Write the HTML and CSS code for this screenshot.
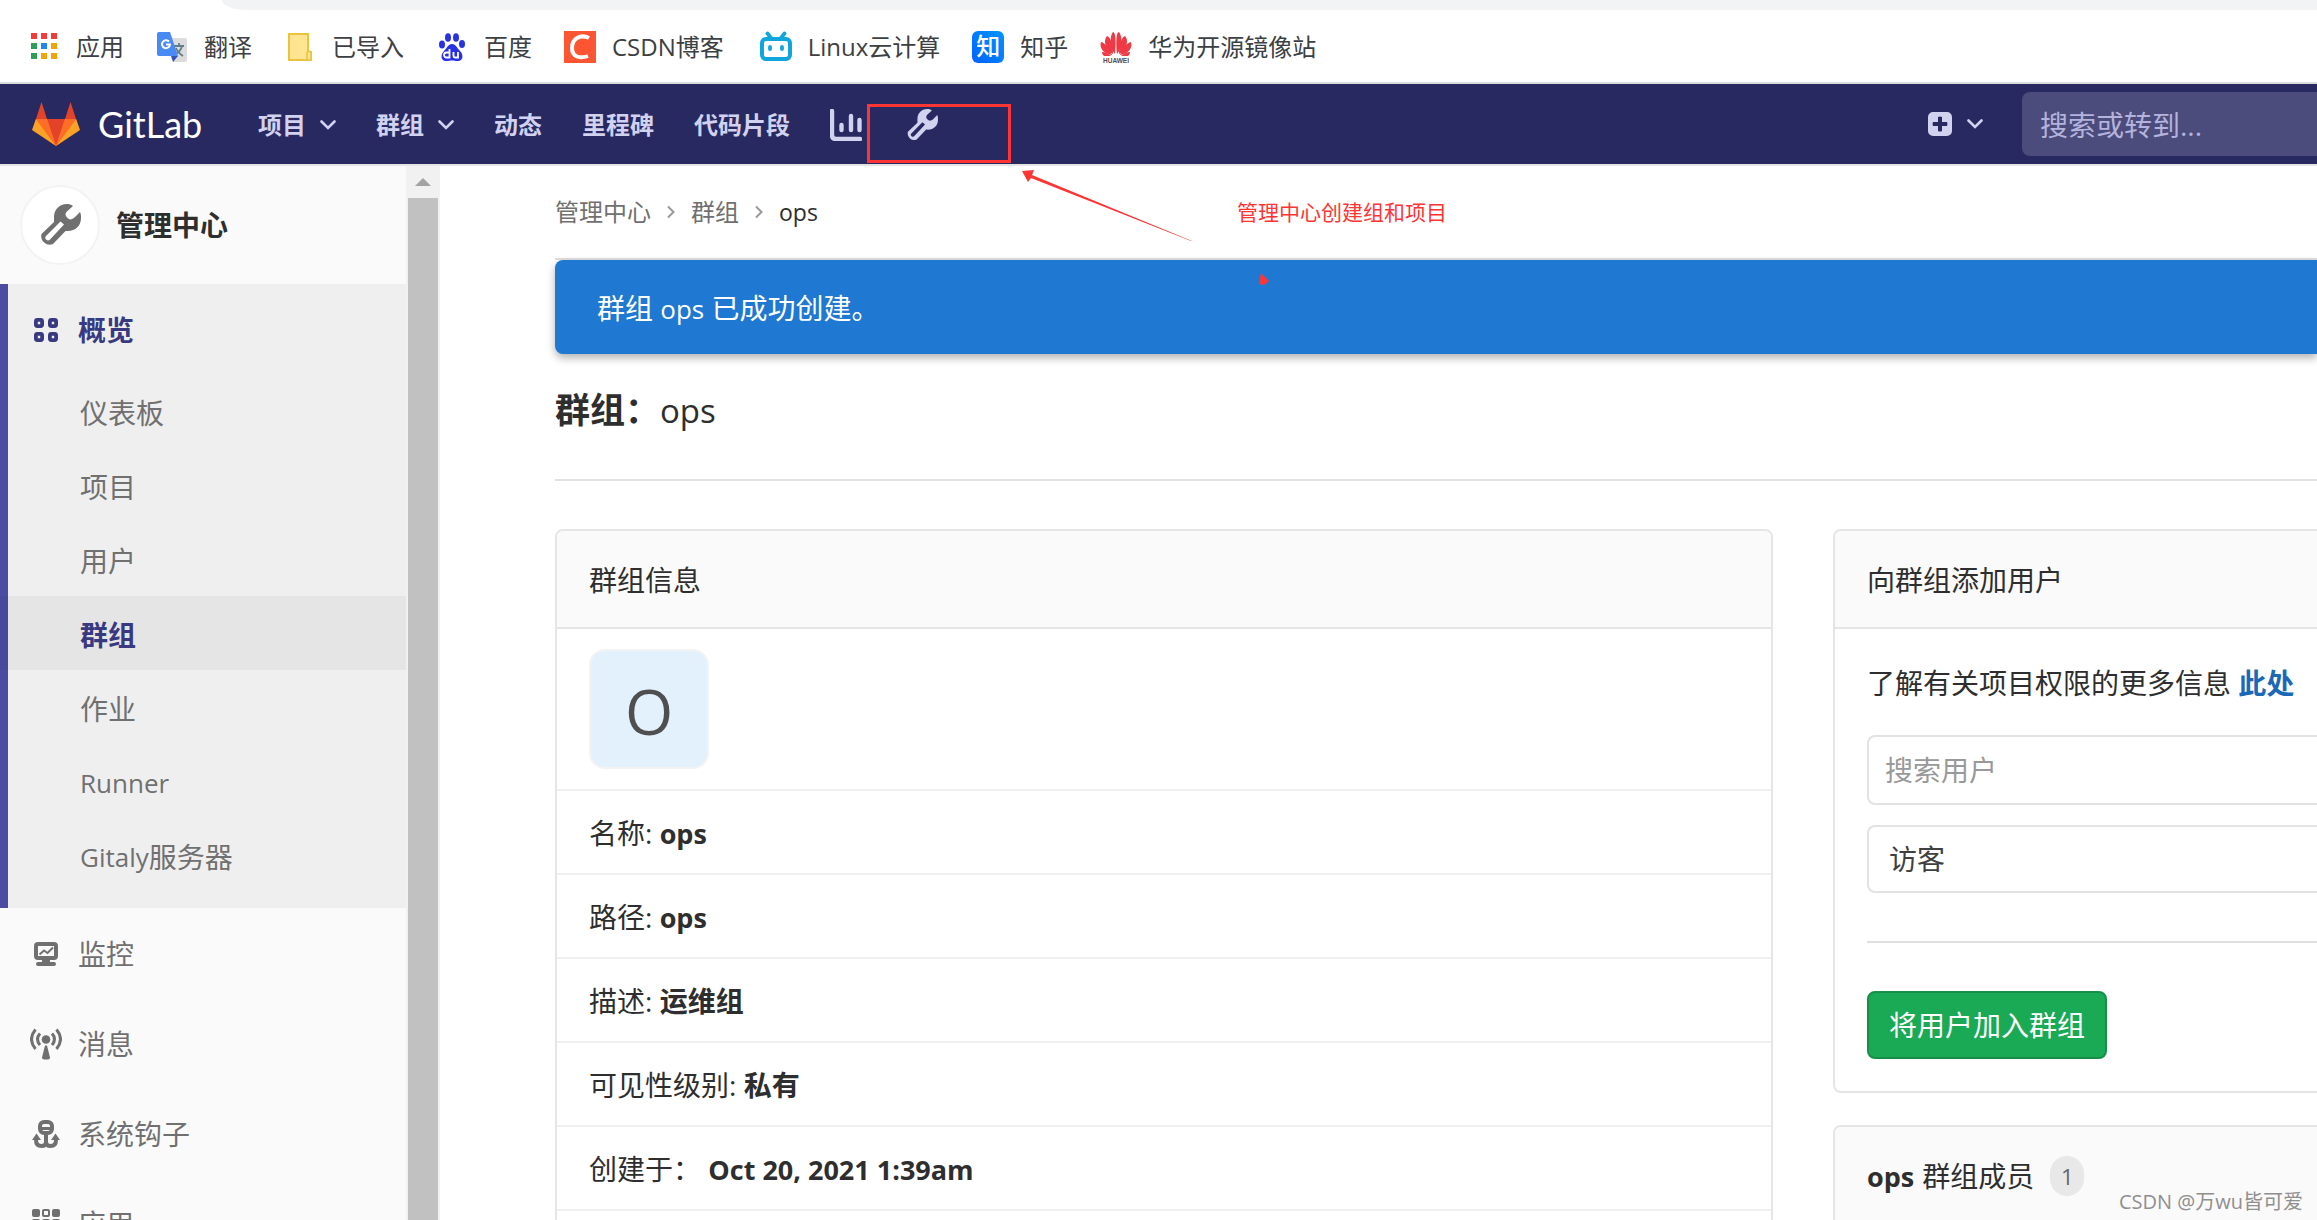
FILE: index.html
```html
<!DOCTYPE html>
<html lang="zh-CN">
<head>
<meta charset="utf-8">
<title>ops · 群组 · 管理中心 · GitLab</title>
<link rel="stylesheet" href="styles.css">
</head>
<body>
<svg class="defs" aria-hidden="true">
  <symbol id="wrench" viewBox="0 0 42 42"><path fill-rule="evenodd" d="M34 2C32 .6 30 0 28 0C20 0 15 6 15 13V18L2.500 30A8.500 8.500 0 0 0 14 40L26.500 27C36 28 42 22 42 14C42 12 42 10 41 8L35.500 13.500C32 16.500 30 15.500 28 13.500C26 11.500 26 9 28.500 7ZM21.500 17.500L25 20.500L11 35.500A2.600 2.600 0 0 1 7 32Z"/></symbol>
  <symbol id="down" viewBox="0 0 16 10"><path d="M1.500 1.500L8 8L14.500 1.500" fill="none" stroke="currentColor" stroke-width="2.600" stroke-linecap="round"/></symbol>
  <symbol id="right" viewBox="0 0 8 14"><path d="M1 1.500L6.500 7L1 12.500" fill="none" stroke="currentColor" stroke-width="2"/></symbol>
</svg>

<div class="omnibox"></div>
<nav class="bookmarks" aria-label="书签">
  <a href="#"><svg viewBox="0 0 32 32"><g fill="#f23b3b"><path d="M3 2h6v6H3zM13 2h6v6h-6zM23 2h6v6h-6z"/></g><path fill="#2f9e5b" d="M3 12h6v6H3zM3 22h6v6H3z"/><path fill="#1e88f0" d="M13 12h6v6h-6z"/><path fill="#f0a30a" d="M23 12h6v6h-6zM13 22h6v6h-6zM23 22h6v6h-6z"/></svg>应用</a>
  <a href="#"><svg viewBox="0 0 32 32"><path fill="#dcdcdc" d="M12 7h17a2 2 0 0 1 2 2v20a2 2 0 0 1-2 2H17z"/><path d="M18 15h10M23 12v3M26 15c-1 4-4 7-7 8M20 17c1 3 4 6 7 8" stroke="#607d8b" stroke-width="1.800" fill="none"/><path fill="#4a8af4" d="M3 1h11l8 24H3a2 2 0 0 1-2-2V3a2 2 0 0 1 2-2z"/><path fill="#3354b8" d="M15 25h7l-5 6z"/><path d="M13 10.500a4 4 0 1 0 1 3h-4" stroke="#fff" stroke-width="2" fill="none"/></svg>翻译</a>
  <a href="#"><svg viewBox="0 0 32 32"><path d="M5 3h19v18h3v8H5z" fill="#ffe591" stroke="#ebc43f" stroke-width="2"/><path d="M23 29v-6a2 2 0 0 1 4-1v7z" fill="#ffe591" stroke="#ebc43f" stroke-width="1.600"/></svg>已导入</a>
  <a href="#"><svg viewBox="0 0 32 32"><g fill="#2932e1"><ellipse cx="6" cy="13.500" rx="3" ry="4"/><ellipse cx="12" cy="6.500" rx="3" ry="4.300"/><ellipse cx="20" cy="6.500" rx="3" ry="4.300"/><ellipse cx="26" cy="13" rx="3" ry="4"/><path d="M16 13c4 0 5 4 8 7c4 4 3 10-2 10c-3 0-4-.5-6-.5S13 30 10 30c-5 0-6-6-2-10c3-3 4-7 8-7z"/></g><path d="M13.500 18v8.500h-3a2 2 0 0 1 0-5h3M17.500 21v4c0 1 .5 1.500 1.500 1.500h3V21" fill="none" stroke="#fff" stroke-width="1.800"/></svg>百度</a>
  <a href="#" class="long"><svg viewBox="0 0 32 32"><path fill="#fc5531" d="M0 0h32v32H0z"/><path d="M25 7C17 3 8 7 8 17c0 9 8 11 16 8" fill="none" stroke="#fff" stroke-width="4"/></svg>CSDN博客</a>
  <a href="#"><svg viewBox="0 0 32 32"><rect x="2" y="8" width="28" height="20" rx="4" fill="#fff" stroke="#10a5dc" stroke-width="4"/><path d="M7.500 2.500L11 7M24.500 2.500L21 7M10 16v2M22 16v2" stroke="#10a5dc" stroke-width="3.800" stroke-linecap="round"/></svg>Linux云计算</a>
  <a href="#"><span class="zhihu">知</span>知乎</a>
  <a href="#"><svg viewBox="0 0 32 32"><g fill="#ee3a45"><path d="M15 23C9 17 10 4 13 1c3 0 3 12 2 22zM17 23c6-6 5-19 2-22c-3 0-3 12-2 22z"/><path d="M13 23C5 19 3 9 7 5c4 1 6 11 6 18zM19 23c8-4 10-14 6-18c-4 1-6 11-6 18z"/><path d="M12 24C4 23-1 17 1 11c4 1 9 7 11 13zM20 24c8-1 13-7 11-13c-4 1-9 7-11 13z"/><path d="M11 25H4c-1-1-2-2-2-4c3 0 7 2 9 4zM21 25h7c1-1 2-2 2-4c-3 0-7 2-9 4z"/></g><text x="16" y="32" text-anchor="middle" font-family="Liberation Sans" font-weight="bold" font-size="6.500" fill="#554a50">HUAWEI</text></svg>华为开源镜像站</a>
</nav>

<header class="navbar">
  <a href="#" class="brand"><svg viewBox="0 0 48 46"><path fill="#fc6d26" d="M24 45L47 27L44 18H4L1 27z"/><path fill="#e24329" d="M24 45L33 18H15zM4 18L9.500 1L15 18zM33 18L38.500 1L44 18z"/><path fill="#fca326" d="M4 18L0 29L24 45zM44 18L48 29L24 45z"/><path fill="#fc6d26" d="M4 18H15L24 45zM44 18H33L24 45z"/></svg>GitLab</a>
  <nav class="menu" aria-label="主导航">
    <button type="button">项目<svg class="caret"><use href="#down"/></svg></button>
    <button type="button">群组<svg class="caret"><use href="#down"/></svg></button>
    <a href="#">动态</a><a href="#">里程碑</a><a href="#">代码片段</a>
    <a href="#" aria-label="实例统计"><svg class="tool" viewBox="0 0 32 32"><path d="M2 2V26Q2 30 6 30H30M11.500 16V21M21 7V21M29.500 11V21" fill="none" stroke="currentColor" stroke-width="4.400" stroke-linecap="round"/></svg></a>
    <a href="#" class="admin" aria-label="管理中心"><svg class="tool"><use href="#wrench"/></svg></a>
  </nav>
  <button type="button" class="create" aria-label="新建"><svg class="plus" viewBox="0 0 24 24"><path fill-rule="evenodd" d="M5 0H19A5 5 0 0 1 24 5V19A5 5 0 0 1 19 24H5A5 5 0 0 1 0 19V5A5 5 0 0 1 5 0zM10 5V10H5Q4 12 5 14H10V19Q12 20 14 19V14H19Q20 12 19 10H14V5Q12 4 10 5z"/></svg><svg class="caret"><use href="#down"/></svg></button>
  <input class="search" type="search" placeholder="搜索或转到..." aria-label="搜索或转到">
</header>

<div class="page">
  <aside class="sidebar">
    <div class="context"><span class="badge-icon"><svg><use href="#wrench"/></svg></span>管理中心</div>
    <section class="active">
      <a href="#" class="top"><svg viewBox="0 0 32 32"><g fill="none" stroke="currentColor" stroke-width="3.800"><rect x="5.900" y="5.900" width="6.200" height="6.200" rx="1.500"/><rect x="19.900" y="5.900" width="6.200" height="6.200" rx="1.500"/><rect x="5.900" y="19.900" width="6.200" height="6.200" rx="1.500"/><rect x="19.900" y="19.900" width="6.200" height="6.200" rx="1.500"/></g></svg>概览</a>
      <ul>
        <li><a href="#">仪表板</a></li>
        <li><a href="#">项目</a></li>
        <li><a href="#">用户</a></li>
        <li><a href="#" class="current">群组</a></li>
        <li><a href="#">作业</a></li>
        <li><a href="#"><span class="latin">Runner</span></a></li>
        <li><a href="#"><span class="latin">Gitaly</span>服务器</a></li>
      </ul>
    </section>
    <a href="#" class="top"><svg viewBox="0 0 32 32"><rect x="6" y="6" width="20" height="14" rx="2" fill="none" stroke="currentColor" stroke-width="4"/><path d="M9.500 16.500L14 12.500L17.500 15L23 9.500" fill="none" stroke="currentColor" stroke-width="2"/><path d="M12 21h8v3h4a2 2 0 0 1 0 4H8a2 2 0 0 1 0-4h4z" fill="currentColor"/></svg>监控</a>
    <a href="#" class="top"><svg viewBox="0 0 32 32"><g fill="currentColor"><circle cx="16" cy="11.500" r="4.300"/><path d="M15 17.500h2l3 12q0 2-2 2h-4q-2 0-2-2z"/></g><g fill="none" stroke="currentColor" stroke-width="3"><path d="M5.500 1.500Q-2.500 11 5.500 21M26.500 1.500Q34.500 11 26.500 21"/><path d="M10 5.500Q5 11 10 17M22 5.500Q27 11 22 17"/></g></svg>消息</a>
    <a href="#" class="top"><svg viewBox="0 0 32 32"><g fill="none" stroke="currentColor" stroke-width="4"><rect x="10" y="4" width="12" height="11" rx="4"/><path d="M10 10.500H22" stroke-width="3"/><path d="M16 16V24Q16 28 11.500 28Q6 28 6 22M16 24Q16 28 20.500 28Q26 28 26 22"/></g><path fill="currentColor" d="M2 22L6.500 15.500L11 22zM21 22L25.500 15.500L30 22z"/></svg>系统钩子</a>
    <a href="#" class="top"><svg viewBox="0 0 32 32"><g fill="currentColor"><rect x="2" y="1" width="8" height="8" rx="2"/><rect x="22" y="1" width="8" height="8" rx="2"/><rect x="2" y="11" width="8" height="8" rx="2"/><rect x="12" y="11" width="8" height="8" rx="2"/><rect x="22" y="11" width="8" height="8" rx="2"/></g><rect x="13" y="2" width="6" height="6" rx="1" fill="none" stroke="currentColor" stroke-width="2"/></svg>应用</a>
  </aside>
  <div class="scrollbar" aria-hidden="true"><i class="arrow"></i><i class="thumb"></i></div>

  <main>
    <nav class="crumbs" aria-label="面包屑"><a href="#">管理中心</a><svg><use href="#right"/></svg><a href="#">群组</a><svg><use href="#right"/></svg><strong>ops</strong></nav>
    <div class="alert" role="status">群组 <span class="latin">ops</span> 已成功创建。</div>
    <h1>群组：<span>ops</span></h1>
    <div class="columns">
      <section class="card">
        <h2>群组信息</h2>
        <ul class="info">
          <li><span class="avatar">O</span></li>
          <li>名称: <strong class="latin">ops</strong></li>
          <li>路径: <strong class="latin">ops</strong></li>
          <li>描述: <strong>运维组</strong></li>
          <li>可见性级别: <strong>私有</strong></li>
          <li>创建于： <strong class="latin">Oct 20, 2021 1:39am</strong></li>
          <li></li>
        </ul>
      </section>
      <div class="side">
        <section class="card">
          <h2>向群组添加用户</h2>
          <form>
            <p>了解有关项目权限的更多信息 <a href="#">此处</a></p>
            <input type="text" placeholder="搜索用户" aria-label="搜索用户">
            <select aria-label="访问级别"><option>访客</option></select>
            <hr>
            <button type="button">将用户加入群组</button>
          </form>
        </section>
        <section class="card">
          <h2><strong class="latin">ops</strong> 群组成员 <span class="count">1</span></h2>
        </section>
      </div>
    </div>
  </main>
</div>

<div class="note-box"></div>
<svg class="note-arrow" viewBox="0 0 172 74"><path fill="#fd3535" d="M0 1L12 0L10 5L170 71L169 71L9 8L6 12z"/></svg>
<div class="note-text">管理中心创建组和项目</div>
<svg class="note-mark" viewBox="0 0 10 12"><path fill="#fd3535" d="M2 0L10 8L5 12L0 11z"/></svg>
<div class="watermark">CSDN @万wu皆可爱</div>
</body>
</html>
```
FILE: styles.css
```css
* { box-sizing: border-box; }
body {
  margin: 0;
  height: 100vh;
  overflow: hidden;
  position: relative;
  display: flex;
  flex-direction: column;
  background: #fff;
  color: #2e2e2e;
  font: 28px/40px "Open Sans", "Noto Sans CJK SC", sans-serif;
}
a { color: inherit; text-decoration: none; }
ul { list-style: none; margin: 0; padding: 0; }
button { font: inherit; color: inherit; background: none; border: 0; padding: 0; }
svg { fill: currentColor; flex: none; }
.defs { position: absolute; width: 0; height: 0; }
.latin { font-size: 26px; line-height: 1; }
strong.latin { font-size: 27px; }

.omnibox { flex: none; height: 10px; margin-left: 222px; background: #f1f3f4; border-bottom-left-radius: 24px 10px; }
.bookmarks {
  flex: none;
  display: flex;
  gap: 32px;
  height: 74px;
  padding: 2px 28px 0;
  border-bottom: 2px solid #dadce0;
  font-size: 24px;
  color: #3c4043;
  white-space: nowrap;
}
.bookmarks a { display: flex; align-items: center; gap: 16px; }
.bookmarks .long { padding-right: 4px; }
.bookmarks svg, .zhihu { width: 32px; height: 32px; }
.zhihu {
  border-radius: 6px;
  background: linear-gradient(45deg, #0062ff, #0095ff);
  color: #fff;
  font-size: 24px;
  font-weight: 500;
  line-height: 30px;
  text-align: center;
}

.navbar { flex: none; display: flex; align-items: center; height: 80px; padding-left: 32px; background: #292961; color: #d1d1f0; }
.brand { display: flex; align-items: center; gap: 18px; width: 226px; color: #fff; font: 36px/48px Lato, sans-serif; }
.brand svg { width: 48px; height: 46px; }
.menu { display: flex; align-items: center; gap: 40px; padding-top: 2px; font-size: 24px; font-weight: 700; flex: 1; }
.menu button, .menu a, .create { display: flex; align-items: center; }
.menu button { gap: 14px; }
.caret { width: 16px; height: 10px; }
.tool { width: 32px; height: 32px; }
.admin { margin-left: 4px; }
.create { gap: 15px; margin-right: 39px; }
.plus { width: 24px; height: 24px; }
.search {
  width: 295px;
  height: 64px;
  padding: 2px 18px 0;
  border: 0;
  border-radius: 8px 0 0 8px;
  background: #4c4c7c;
  color: #fff;
  font: inherit;
}
.search::placeholder { color: #b3b3dd; }

.page { flex: 1; min-height: 0; display: flex; border-top: 2px solid #e4e4e7; }
.sidebar { flex: none; width: 406px; overflow: hidden; background: #fafafa; color: #707070; }
.context { display: flex; align-items: center; gap: 16px; height: 118px; padding: 0 20px; color: #2e2e2e; font-weight: 700; }
.badge-icon { display: grid; place-items: center; width: 80px; height: 80px; border: 2px solid #f3f3f3; border-radius: 50%; background: #fff; color: #707070; }
.badge-icon svg { width: 42px; height: 42px; }
.active { padding-bottom: 16px; background: #efefef; box-shadow: inset 8px 0 #4b4ba3; }
.top { display: flex; align-items: center; gap: 16px; height: 90px; padding: 2px 0 0 30px; }
.top svg { width: 32px; height: 32px; }
.active .top, .current { color: #393982; font-weight: 700; }
.active li a { display: flex; align-items: center; height: 74px; padding: 3px 0 0 80px; }
.active li .current { background: rgba(0, 0, 0, 0.04); }

.scrollbar { flex: none; width: 34px; display: flex; flex-direction: column; align-items: center; background: #f1f1f1; }
.arrow { margin: 12px 0; border: solid transparent; border-width: 0 8px 8px; border-bottom-color: #a3a3a3; }
.thumb { flex: 1; width: 30px; background: #c1c1c1; }

main { flex: 1; min-width: 0; overflow: hidden; padding-left: 115px; }
.crumbs { display: flex; align-items: center; gap: 16px; height: 94px; border-bottom: 2px solid #dfdfdf; font-size: 24px; color: #707070; }
.crumbs svg { width: 8px; height: 14px; color: #999; }
.crumbs strong { color: #2e2e2e; font-size: 23px; font-weight: 500; }
.alert { padding: 28px 42px 26px; border-radius: 8px 0 0 8px; background: #1f78d1; color: #fff; box-shadow: 0 4px 8px rgba(0, 0, 0, 0.3); }
h1 { margin: 0 0 48px; padding: 32px 0 45px; border-bottom: 2px solid #e1e1e1; font-size: 35px; line-height: 48px; }
h1 span { font-size: 33px; font-weight: 400; line-height: 1; }
.columns { display: grid; grid-template-columns: 1218fr 484fr; gap: 60px; align-items: start; }
.card { border: 2px solid #e5e5e5; border-radius: 8px; overflow: hidden; }
.side { display: grid; gap: 32px; }
.side .card { border-right: 0; border-radius: 8px 0 0 8px; }
h2 { margin: 0; padding: 29px 32px 27px; border-bottom: 2px solid #e5e5e5; background: #fafafa; font-size: 28px; font-weight: 400; line-height: 40px; display: flex; align-items: center; gap: 8px; }
.info li { min-height: 84px; padding: 22px 32px 20px; border-bottom: 2px solid #f0f0f0; white-space: pre-wrap; }
.info li:first-child { padding: 20px 32px; }
.avatar { display: block; width: 120px; height: 120px; border: 2px solid #f3f3f3; border-radius: 16px; background: #e3f1fd; color: #4f4f4f; font-size: 62px; line-height: 120px; text-align: center; }

form { padding: 34px 0 32px 32px; }
form p { margin: 0 0 32px; white-space: nowrap; }
form p a { color: #1b69b6; font-weight: 700; }
form input, form select {
  display: block;
  width: 100%;
  border: 2px solid #e3e3e3;
  border-right: 0;
  border-radius: 8px 0 0 8px;
  background: #fff;
  font: inherit;
  color: #404040;
  appearance: none;
}
form input { height: 70px; padding: 0 16px; margin-bottom: 20px; }
form input::placeholder { color: #999; }
form select { height: 68px; padding: 0 20px; }
form hr { margin: 48px 0; border: 0; border-top: 2px solid #dfdfdf; }
form button { display: block; height: 68px; padding: 0 20px; border: 2px solid #168f48; border-radius: 8px; background: #1aaa55; color: #fff; }
.count { margin-left: 8px; width: 34px; border-radius: 17px; background: #e8e8e8; color: #666; font-size: 22px; text-align: center; }

.note-box { position: absolute; left: 867px; top: 104px; width: 144px; height: 59px; border: 3px solid #fd3535; }
.note-arrow { position: absolute; left: 1022px; top: 170px; width: 172px; height: 74px; }
.note-text { position: absolute; left: 1237px; top: 192px; font-size: 21px; color: #fd3535; }
.note-mark { position: absolute; left: 1259px; top: 273px; width: 10px; height: 12px; }
.watermark { position: absolute; right: 14px; bottom: -2px; font-size: 20px; color: #8f8f8f; }
```
